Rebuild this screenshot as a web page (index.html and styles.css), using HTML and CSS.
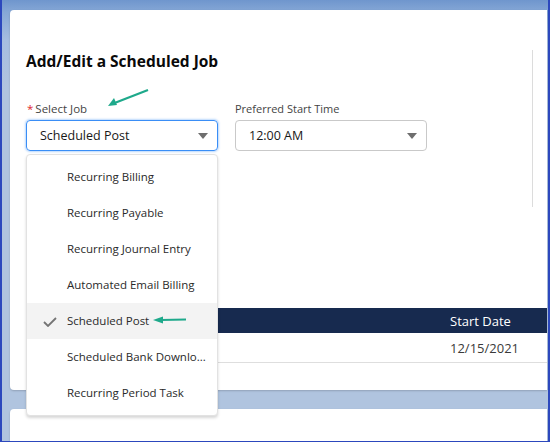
FILE: index.html
```html
<!DOCTYPE html>
<html>
<head>
<meta charset="utf-8">
<link rel="stylesheet" href="styles.css">
</head>
<body>
<div class="frame">
  <div class="card">
    <div class="form-area">
      <h1 class="title">Add/Edit a Scheduled Job</h1>
      <div class="fields">
        <div class="field">
          <div class="label"><span class="req">*</span>Select Job</div>
          <div class="select focused">
            <span class="value">Scheduled Post</span>
            <span class="caret"></span>
          </div>
          <div class="menu">
            <div class="item">Recurring Billing</div>
            <div class="item">Recurring Payable</div>
            <div class="item">Recurring Journal Entry</div>
            <div class="item">Automated Email Billing</div>
            <div class="item selected">
              <svg class="check" width="14" height="10" viewBox="0 0 14 10"><path d="M1 5 L5 9 L13 1" fill="none" stroke="#747474" stroke-width="1.8"/></svg>
              Scheduled Post
            </div>
            <div class="item">Scheduled Bank Downlo...</div>
            <div class="item">Recurring Period Task</div>
          </div>
          <svg class="arrow arrow-1" width="44" height="20" viewBox="0 0 44 20"><path d="M42 2 L6 16" stroke="#1ea98b" stroke-width="2.2" fill="none"/><path d="M2 18 L8 10 L11 17 Z" fill="#1ea98b"/></svg>
          <svg class="arrow arrow-2" width="34" height="8" viewBox="0 0 34 8"><path d="M8 4 L33 3.5" stroke="#1ea98b" stroke-width="2" fill="none"/><path d="M0 4 L10 0.5 L10 7.5 Z" fill="#1ea98b"/></svg>
        </div>
        <div class="field">
          <div class="label label-plain">Preferred Start Time</div>
          <div class="select">
            <span class="value">12:00 AM</span>
            <span class="caret"></span>
          </div>
        </div>
      </div>
    </div>
    <div class="table">
      <div class="thead"><span class="col-date">Start Date</span></div>
      <div class="trow"><span class="col-date">12/15/2021</span></div>
    </div>
  </div>
  <div class="card card-2"></div>
</div>
</body>
</html>
```
FILE: styles.css
```css
html, body {
  margin: 0;
  padding: 0;
}
body {
  width: 550px;
  height: 442px;
  overflow: hidden;
  font-family: "Open Sans", "Noto Sans", sans-serif;
}
.frame {
  box-sizing: border-box;
  width: 550px;
  height: 442px;
  border-left: 2px solid #2c48bd;
  border-right: 2px solid #2c48bd;
  border-bottom: 1px solid #2c48bd;
  background: linear-gradient(180deg, #6f96cd 0px, #86a8d6 12px, #a6bde0 40px, #b0c4df 90px, #b0c4df 100%);
  padding: 10px 1px 0 8px;
  overflow: hidden;
}
.card {
  background: #fff;
  border-radius: 4px 0 0 4px;
  box-shadow: 0 1px 2px rgba(0,0,0,0.18);
  height: 380px;
  padding: 40px 0 0 16px;
  box-sizing: border-box;
}
.card-2 {
  margin-top: 19px;
  height: 40px;
  padding: 0;
}
.form-area {
  width: 507px;
  height: 157px;
  border-right: 1px solid #dcdcdc;
  box-sizing: border-box;
}
.title {
  margin: 0;
  padding-top: 1px;
  font-size: 15.5px;
  font-weight: 700;
  color: #0a0a0a;
  line-height: 20px;
}
.fields {
  display: flex;
  gap: 17px;
  margin-top: 30px;
}
.field {
  position: relative;
  width: 192px;
}
.label {
  font-size: 11.5px;
  color: #444;
  line-height: 16px;
  padding-left: 1px;
}
.label-plain {
  padding-left: 0;
  font-size: 11px;
}
.req {
  color: #e0262d;
  margin-right: 2px;
}
.select {
  margin-top: 3px;
  height: 31px;
  box-sizing: border-box;
  border: 1px solid #c9c9c9;
  border-radius: 4px;
  display: flex;
  align-items: center;
  justify-content: space-between;
  padding: 0 9px 0 13px;
  font-size: 12.5px;
  color: #181818;
}
.select.focused {
  border-color: #3a8ef6;
  box-shadow: 0 0 2px 1px rgba(58,142,246,0.35);
}
.caret {
  width: 0;
  height: 0;
  border-left: 5px solid transparent;
  border-right: 5px solid transparent;
  border-top: 6px solid #6e6e6e;
}
.menu {
  position: absolute;
  left: 0;
  top: 53px;
  width: 192px;
  box-sizing: border-box;
  background: #fff;
  border: 1px solid #e2e2e2;
  border-radius: 4px;
  box-shadow: 0 2px 3px rgba(0,0,0,0.16);
  padding: 4px 0;
  z-index: 2;
}
.item {
  position: relative;
  height: 36px;
  line-height: 36px;
  padding-left: 40px;
  font-size: 11.5px;
  color: #2a2a2a;
  white-space: nowrap;
}
.item.selected {
  background: #f3f3f3;
}
.check {
  position: absolute;
  left: 16px;
  top: 14px;
}
.arrow {
  position: absolute;
  z-index: 3;
}
.arrow-1 {
  left: 80px;
  top: -13px;
}
.arrow-2 {
  left: 127px;
  top: 215px;
}
.table {
  margin-top: 101px;
}
.thead {
  height: 25px;
  background: #172a4f;
  color: #fff;
  font-size: 13px;
  display: flex;
  align-items: center;
}
.trow {
  height: 29px;
  border-bottom: 1px solid #dedede;
  color: #3a3a3a;
  font-size: 13px;
  display: flex;
  align-items: center;
}
.col-date {
  margin-left: 424px;
}
```
